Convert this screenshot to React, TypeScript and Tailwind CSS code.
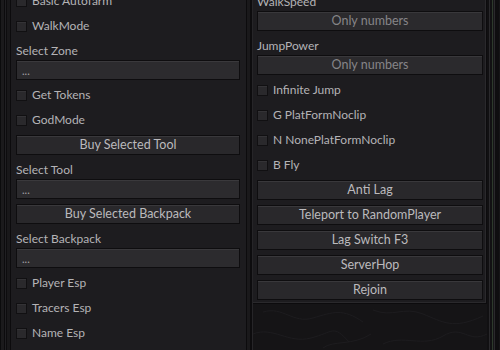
import React from 'react';

const font = { fontFamily: 'Lato, "Noto Sans", sans-serif' };

function Toggle({ label }: { label: string }) {
  return (
    <div className="h-[20px] flex items-center gap-[5px] shrink-0">
      <span className="w-[11px] h-[11px] bg-[#2a292c] border border-[#111012] shadow-[inset_0_1px_0_#343336]" />
      <span className="text-[12px] text-[#b4b3b6] leading-none">{label}</span>
    </div>
  );
}

function Label({ text }: { text: string }) {
  return (
    <div className="h-[19px] flex items-center text-[12px] text-[#b4b3b6] leading-none shrink-0 -mb-[5px]">
      {text}
    </div>
  );
}

function Btn({ text }: { text: string }) {
  return (
    <div className="h-[20px] shrink-0 flex items-center justify-center bg-[#29282b] border border-[#0e0d0f] shadow-[inset_0_1px_0_#39383b] text-[12.5px] text-[#bbbabd] leading-none">
      {text}
    </div>
  );
}

function Dropdown() {
  return (
    <div className="h-[20px] shrink-0 flex items-center pl-[5px] bg-[#2c2b2e] border border-[#0e0d0f] shadow-[inset_0_1px_0_#3a393c] text-[11px] text-[#a3a2a5] leading-none">
      ...
    </div>
  );
}

function NumberBox() {
  return (
    <div className="h-[20px] shrink-0 flex items-center justify-center bg-[#2b2a2d] border border-[#0e0d0f] shadow-[inset_0_1px_0_#39383b] text-[12.5px] text-[#868588] leading-none">
      Only numbers
    </div>
  );
}

export default function App() {
  return (
    <div className="w-[500px] h-[350px] overflow-hidden bg-[#161517] flex" style={font}>
      {/* left frame edge */}
      <div className="flex h-full shrink-0">
        <div className="w-[1px] bg-[#0b0b0c]" />
        <div className="w-[3px] bg-[#1b1a1c]" />
        <div className="w-[1px] bg-[#0c0b0d]" />
        <div className="w-[1px] bg-[#201f22]" />
        <div className="w-[1px] bg-[#0d0c0e]" />
        <div className="w-[3px] bg-[#19181a]" />
      </div>

      {/* left panel */}
      <div className="w-[237px] h-full shrink-0 bg-[#1d1c1f] border-l border-r border-[#0c0b0d] pl-[5px] pr-[6px] overflow-hidden">
        <div className="flex flex-col gap-[5px] -mt-[9px]">
          <Toggle label="Basic Autofarm" />
          <Toggle label="WalkMode" />
          <Label text="Select Zone" />
          <Dropdown />
          <Toggle label="Get Tokens" />
          <Toggle label="GodMode" />
          <Btn text="Buy Selected Tool" />
          <Label text="Select Tool" />
          <Dropdown />
          <Btn text="Buy Selected Backpack" />
          <Label text="Select Backpack" />
          <Dropdown />
          <Toggle label="Player Esp" />
          <Toggle label="Tracers Esp" />
          <Toggle label="Name Esp" />
        </div>
      </div>

      {/* gap between panels */}
      <div className="flex h-full shrink-0">
        <div className="w-[3px] bg-[#1a191b]" />
        <div className="w-[2px] bg-[#0d0c0e]" />
        <div className="w-[1px] bg-[#262528]" />
      </div>

      {/* right column */}
      <div className="w-[234px] h-full shrink-0 flex flex-col">
        <div className="h-[304px] shrink-0 bg-[#1d1c1f] border-r border-b border-[#0c0b0d] shadow-[inset_-1px_-1px_0_#2a292c] pl-[4px] pr-[3px] overflow-hidden">
          <div className="flex flex-col gap-[5px] -mt-[8px]">
            <Label text="WalkSpeed" />
            <NumberBox />
            <Label text="JumpPower" />
            <NumberBox />
            <Toggle label="Infinite Jump" />
            <Toggle label="G PlatFormNoclip" />
            <Toggle label="N NonePlatFormNoclip" />
            <Toggle label="B Fly" />
            <Btn text="Anti Lag" />
            <Btn text="Teleport to RandomPlayer" />
            <Btn text="Lag Switch F3" />
            <Btn text="ServerHop" />
            <Btn text="Rejoin" />
          </div>
        </div>
        <div className="flex-1 bg-[#151416] overflow-hidden">
          <svg width="234" height="46" viewBox="0 0 234 46" fill="none" stroke="#1d1c1f" strokeWidth="1">
            <path d="M10 8 C30 2 40 20 60 14 S90 4 110 18" />
            <path d="M0 30 C20 22 35 40 58 34 S80 20 96 38" />
            <path d="M120 6 C140 14 150 2 170 10 S200 26 230 12" />
            <path d="M130 40 C150 30 170 44 190 32 S215 40 234 30" />
            <path d="M70 44 C80 36 100 42 118 30" />
          </svg>
        </div>
      </div>

      {/* right frame edge */}
      <div className="flex h-full shrink-0">
        <div className="w-[2px] bg-[#111012]" />
        <div className="w-[1px] bg-[#2a292c]" />
        <div className="w-[2px] bg-[#121113]" />
        <div className="w-[1px] bg-[#2d3a2c]" />
        <div className="w-[1px] bg-[#161517]" />
        <div className="w-[1px] bg-[#2a292c]" />
        <div className="w-[4px] bg-[#0f0e10]" />
      </div>
    </div>
  );
}
